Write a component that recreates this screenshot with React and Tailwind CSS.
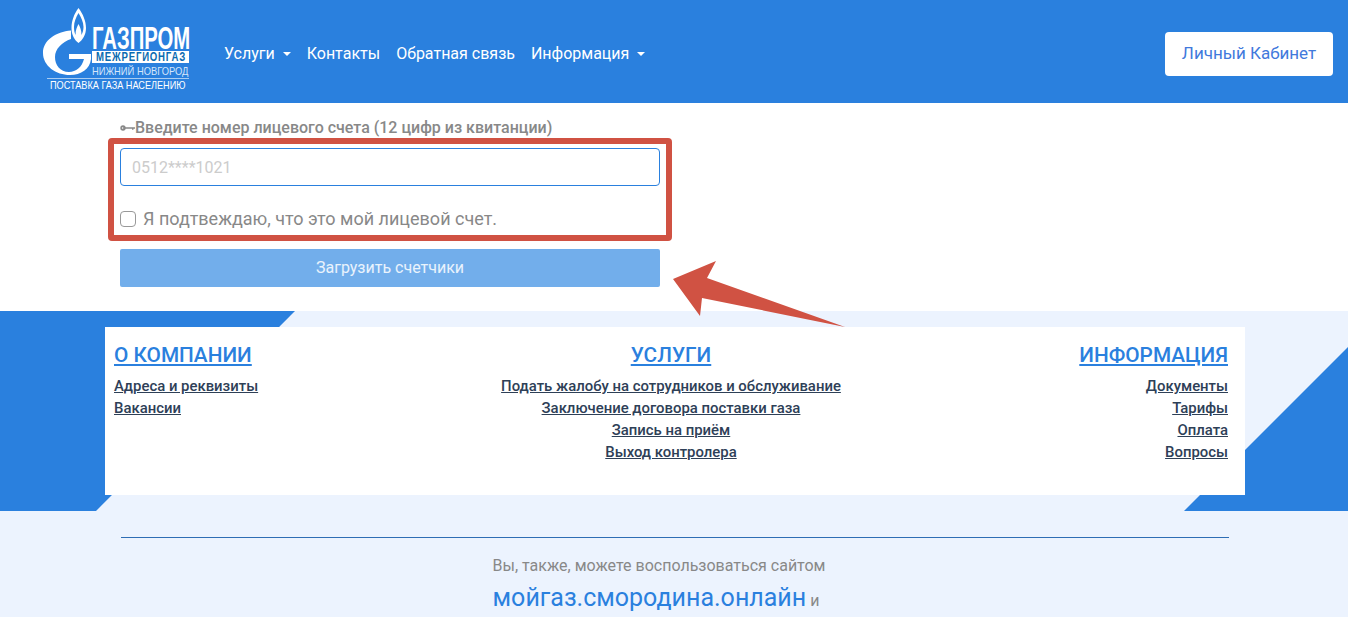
const MAIN = 'font-["Roboto",sans-serif]'

function Logo() {
  return (
    <div className="relative w-[160px] h-[84px] shrink-0 self-start text-white font-['Liberation_Sans',sans-serif]">
      <svg className="absolute left-0 top-0" width="60" height="76" viewBox="0 0 60 76">
        {/* flame */}
        <path fillRule="evenodd" fill="#fff" d="M42.500 4 C38 10 35.500 17 35.500 24 C35.500 31 38.500 36 42.500 39 C46.500 36 50 31 50 24 C50 17 47 10 42.500 4 Z M42.500 9 C40 13 38 18 38 23 C38 26 38.500 29 39.500 31 C39.500 26 41 23 42.500 20 C44 23 45.500 26 45.500 31 C46.500 29 47.500 26 47.500 23 C47.500 18 45 13 42.500 9 Z" />
        <path fill="#fff" d="M42.500 23 C41 27 40.500 30 40.500 32 C40.500 34 41.500 36 42.500 37 C43.500 36 44.500 34 44.500 32 C44.500 30 44 27 42.500 23 Z" />
        {/* G */}
        <path fill="#fff" d="M35 26.500 C20 28 7 36 7 49 C7 62 20 71 34 71 C45 71 54 65 55 55 L55 50 L33 50 L33 55 L48 55 C46 63 40 68 33 68 C24 68 19 61 19 53 C19 45 26 38 35 35 Z" />
      </svg>
      <div className="pt-[22px]">
        <div className="ml-[56px] w-[97px]">
          <div className="h-[24px] text-[32px] leading-[24px] font-bold whitespace-nowrap origin-left [transform:scaleX(0.635)]">ГАЗПРОМ</div>
          <div className="mt-[1px] h-[12px] bg-white text-[#0b6bb0] text-[12px] leading-[12px] font-bold tracking-[1px] pl-[4px] whitespace-nowrap">
            <div className="origin-left [transform:scaleX(0.8)]">МЕЖРЕГИОНГАЗ</div>
          </div>
          <div className="mt-[2px] h-[12px] text-[11px] leading-[12px] text-[#d5e6fa] whitespace-nowrap origin-left [transform:scaleX(0.85)]">НИЖНИЙ НОВГОРОД</div>
        </div>
        <div className="ml-[11px] mt-[1px] w-[142px] h-px bg-[#a9cdf2]"></div>
        <div className="ml-[14px] mt-[1px] text-[10.500px] leading-[11px] whitespace-nowrap origin-left [transform:scaleX(0.87)]">ПОСТАВКА ГАЗА НАСЕЛЕНИЮ</div>
      </div>
    </div>
  )
}

function NavLink({ children, caret }) {
  return (
    <a className="flex items-center px-2 text-white text-base">
      {children}
      {caret && <span className="ml-2 w-0 h-0 border-x-[4.500px] border-x-transparent border-t-[4.500px] border-t-white"></span>}
    </a>
  )
}

function Header() {
  return (
    <header className="h-[103px] bg-[#2a80de] flex items-center pl-[36px] pr-[15px] pt-[4px]">
      <Logo />
      <nav className="flex ml-[20px]">
        <NavLink caret>Услуги</NavLink>
        <NavLink>Контакты</NavLink>
        <NavLink>Обратная связь</NavLink>
        <NavLink caret>Информация</NavLink>
      </nav>
      <button className="ml-auto w-[168px] h-[44px] bg-white rounded text-[#4179dc] text-[17px]">Личный Кабинет</button>
    </header>
  )
}

function KeyIcon() {
  return (
    <svg width="15" height="8" viewBox="0 0 15 8" className="shrink-0">
      <circle cx="3" cy="4" r="2.700" fill="#888" />
      <circle cx="2.600" cy="4" r="0.800" fill="#fff" />
      <path d="M5 3.300 H15 V4.700 H13.500 V5.800 H12 V4.700 H5 Z" fill="#888" />
    </svg>
  )
}

function AccountForm() {
  return (
    <section className="h-[208px] pl-[108px] relative">
      <div className="flex items-center h-[35px] pl-[12px] pt-[14px] text-[#888] text-base font-medium">
        <KeyIcon />
        <span>Введите номер лицевого счета (12 цифр из квитанции)</span>
      </div>
      <div className="w-[564px] h-[103px] border-[6px] border-[#d05243] rounded-[4px] px-[6px] pt-[4px]">
        <input
          readOnly
          placeholder="0512****1021"
          className="block w-[540px] h-[38px] border border-[#2a80de] rounded px-[11px] text-base outline-none placeholder:text-[#ccc]"
        />
        <label className="flex items-center mt-[23px] text-[#888] text-[18px] leading-[20px]">
          <span className="w-4 h-4 border border-[#999] rounded-[4px] bg-white mr-[7px]"></span>
          Я подтвеждаю, что это мой лицевой счет.
        </label>
      </div>
      <button className="block ml-[12px] mt-[8px] w-[540px] h-[38px] bg-[#72aeeb] rounded-[2px] text-white/85 text-base">Загрузить счетчики</button>
      {/* red pointer arrow */}
      <svg className="absolute left-[670px] top-[155px] z-10" width="180" height="70" viewBox="0 0 180 70">
        <path fill="#d05243" d="M3 21 L46 3 L37 20 L175 69 L32 40 L30 58 Z" />
      </svg>
    </section>
  )
}

function FooterColumn({ title, links, align }) {
  return (
    <div className={align}>
      <h3 className="text-[20.800px] leading-[24px] font-medium text-[#2a80de] underline mb-[8px]">{title}</h3>
      <ul className="text-[14.900px] leading-[22px] font-medium text-[#2e4057]">
        {links.map((l) => (
          <li key={l}><a className="underline">{l}</a></li>
        ))}
      </ul>
    </div>
  )
}

function Footer() {
  return (
    <footer className="relative bg-[#ecf3fe] h-[306px]">
      <svg className="absolute left-0 top-0" width="1348" height="200" viewBox="0 0 1348 200">
        <path fill="#2a80de" d="M0 0 H295 L96 200 H0 Z" />
        <path fill="#2a80de" d="M1348 36 V200 H1184 Z" />
      </svg>
      <div className="relative pt-4">
        <div className="ml-[105px] w-[1140px] h-[168px] bg-white px-[9px] pt-[16px] pr-[17px] grid grid-cols-3">
          <FooterColumn title="О КОМПАНИИ" links={['Адреса и реквизиты', 'Вакансии']} align="text-left" />
          <FooterColumn
            title="УСЛУГИ"
            links={['Подать жалобу на сотрудников и обслуживание', 'Заключение договора поставки газа', 'Запись на приём', 'Выход контролера']}
            align="text-center whitespace-nowrap"
          />
          <FooterColumn title="ИНФОРМАЦИЯ" links={['Документы', 'Тарифы', 'Оплата', 'Вопросы']} align="text-right" />
        </div>
        <div className="ml-[121px] mr-[119px] mt-[42px] border-t border-[#2e6db4]"></div>
        <div className="pr-[30px] pt-[17px] text-center text-[#888]">
          <p className="text-base leading-[22px]">Вы, также, можете воспользоваться сайтом</p>
          <p className="mt-[5px] pr-[6px] text-base leading-[32px]"><a className="text-[#2a80de] text-[25px]">мойгаз.смородина.онлайн</a> и</p>
        </div>
      </div>
    </footer>
  )
}

export default function App() {
  return (
    <div className={`${MAIN} h-[617px] overflow-hidden bg-white`}>
      <Header />
      <AccountForm />
      <Footer />
    </div>
  )
}
